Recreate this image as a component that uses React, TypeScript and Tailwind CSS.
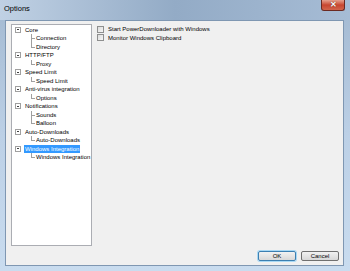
import { ReactNode } from "react";

type Node = { label: string; children: string[]; selected?: boolean };

const tree: Node[] = [
  { label: "Core", children: ["Connection", "Directory"] },
  { label: "HTTP/FTP", children: ["Proxy"] },
  { label: "Speed Limit", children: ["Speed Limit"] },
  { label: "Anti-virus integration", children: ["Options"] },
  { label: "Notifications", children: ["Sounds", "Balloon"] },
  { label: "Auto-Downloads", children: ["Auto-Downloads"] },
  { label: "Windows Integration", children: ["Windows Integration"], selected: true },
];

function ExpandBox() {
  return (
    <div className="relative h-[6px] w-[6px] shrink-0 border border-[#a0a0a0] bg-white">
      <div className="absolute left-[1px] top-[1.5px] h-px w-[2px] bg-[#404040]" />
    </div>
  );
}

function ParentRow({ node }: { node: Node }) {
  return (
    <div className="flex h-[8.5px] items-center pl-[3px]">
      <ExpandBox />
      <span
        className={`ml-[3px] whitespace-nowrap px-[1px] leading-[8px] ${
          node.selected ? "bg-[#3399ff] text-white" : "text-black"
        }`}
      >
        {node.label}
      </span>
    </div>
  );
}

function ChildRow({ label, last }: { label: string; last: boolean }) {
  return (
    <div className="flex h-[8.5px] items-stretch pl-[19px]">
      <div className="relative w-[4px] shrink-0">
        <div
          className={`absolute left-0 top-0 w-px bg-[#a0a0a0] ${last ? "h-1/2" : "h-full"}`}
        />
        <div className="absolute left-0 top-1/2 h-px w-[4px] bg-[#a0a0a0]" />
      </div>
      <span className="ml-[1px] flex items-center whitespace-nowrap leading-[8px] text-black">
        {label}
      </span>
    </div>
  );
}

function Checkbox({ children }: { children: ReactNode }) {
  return (
    <div className="flex h-[8.5px] items-center">
      <div className="h-[7px] w-[7px] border border-[#8e8f8f] bg-gradient-to-br from-[#dcdcdc] to-[#f6f6f6]" />
      <span className="ml-[4px] whitespace-nowrap leading-[8px] text-black">{children}</span>
    </div>
  );
}

function Button({ children, primary }: { children: ReactNode; primary?: boolean }) {
  return (
    <div
      className={`flex h-[10px] w-[38px] items-center justify-center rounded-[2px] border bg-gradient-to-b from-[#f2f2f2] to-[#d8d8d8] leading-[8px] text-black ${
        primary ? "border-[#3c7fb1] shadow-[0_0_0_1px_#a8d8f4]" : "border-[#707070]"
      }`}
    >
      {children}
    </div>
  );
}

export default function App() {
  return (
    <div
      className="flex h-[271px] w-[350px] flex-col bg-gradient-to-b from-[#a3b9d1] via-[#bcd0e6] to-[#c9dcef] text-[6px]"
      style={{ fontFamily: '"Liberation Sans", Arial, sans-serif' }}
    >
      {/* title bar */}
      <div className="flex h-[20px] items-start bg-gradient-to-r from-[#c0d1e4] via-[#93abc6] to-[#a6bcd5]">
        <span className="ml-[4px] mt-[4px] text-[7.5px] leading-[9px] text-black">Options</span>
        <div className="flex-1" />
        <div className="mr-[5px] flex h-[11px] w-[24px] items-center justify-center rounded-b-[3px] border border-t-0 border-[#6b2a22] bg-gradient-to-b from-[#e5a08e] via-[#c7452f] to-[#d2654c]">
          <span className="text-[8px] font-bold leading-[8px] text-white [text-shadow:0_0_1px_#3a0d05]">
            ✕
          </span>
        </div>
      </div>

      {/* client area */}
      <div className="mb-[5px] ml-[5px] mr-[6px] flex flex-1 flex-col border border-[#7f97b2] bg-[#f0f0f0]">
        <div className="flex flex-1 pl-[5px] pt-[3px]">
          <div className="h-[222px] w-[81px] overflow-hidden border border-[#abadb3] bg-white pt-[0.5px]">
            {tree.map((node) => (
              <div key={node.label + node.children[0]}>
                <ParentRow node={node} />
                {node.children.map((c, i) => (
                  <ChildRow key={i} label={c} last={i === node.children.length - 1} />
                ))}
              </div>
            ))}
          </div>
          <div className="ml-[5px] flex flex-col pt-[1px]">
            <Checkbox>Start PowerDownloader with Windows</Checkbox>
            <Checkbox>Monitor Windows Clipboard</Checkbox>
          </div>
        </div>
        <div className="flex justify-end gap-[5px] pb-[4px] pr-[4px]">
          <Button primary>OK</Button>
          <Button>Cancel</Button>
        </div>
      </div>
    </div>
  );
}
